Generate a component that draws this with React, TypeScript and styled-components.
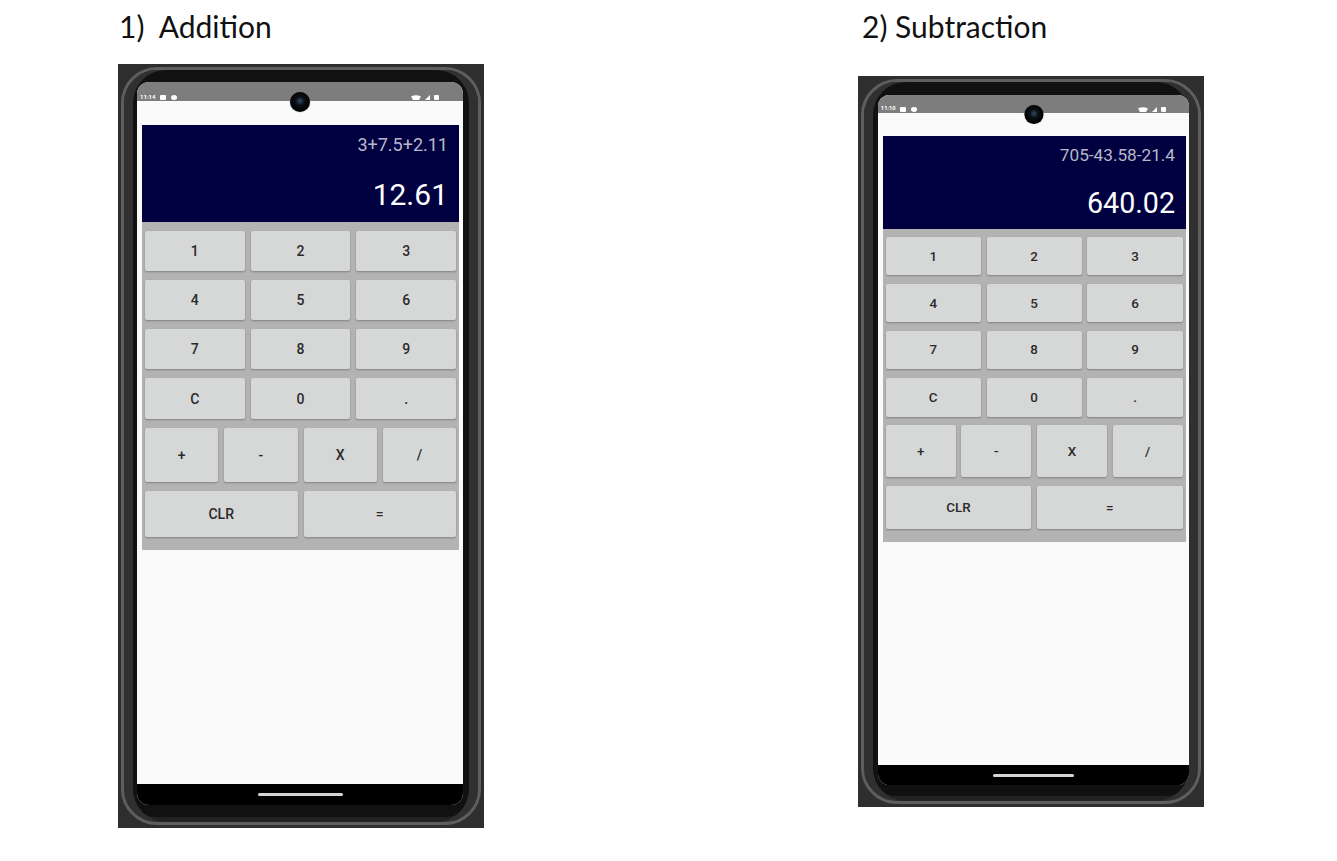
import React from 'react';
import styled, { createGlobalStyle } from 'styled-components';

// every size inside the phone screen is scaled by --k (second screenshot is a bit smaller)
const u = (n: number) => `calc(${n}px * var(--k))`;

const GlobalStyle = createGlobalStyle`
  body {
    margin: 0;
    background: #ffffff;
    font-family: Roboto, "Noto Sans", sans-serif;
  }
`;

const Page = styled.div`
  display: flex;
  align-items: flex-start;
  gap: 374px;
  width: 1337px;
  height: 861px;
  padding: 11px 0 0 118px;
  box-sizing: border-box;
`;

const Column = styled.section`
  display: flex;
  flex-direction: column;
`;

const Title = styled.h2<{ $indent: number }>`
  margin: 0;
  padding-left: ${p => p.$indent}px;
  font-family: Lato, "Open Sans", sans-serif;
  font-weight: 400;
  font-size: 30px;
  line-height: 30px;
  color: #111;
  white-space: pre;
`;

const Shell = styled.div<{ $top: number }>`
  margin-top: ${p => p.$top}px;
  padding: 3px;
  background: #2e2e2e;
`;

const Body = styled.div<{ $pad: string }>`
  padding: ${p => p.$pad};
  border: 3px solid #5e5e5e;
  border-radius: 36px;
  background: #111;
  box-shadow: inset 9px 0 0 #303030, inset -9px 0 0 #303030, inset 0 -5px 0 #222;
`;

const Screen = styled.div<{ $k: number }>`
  --k: ${p => p.$k};
  position: relative;
  display: flex;
  flex-direction: column;
  width: ${u(326)};
  height: ${u(723)};
  border-radius: ${u(12)};
  overflow: hidden;
  background: #fafafa;
`;

const StatusBar = styled.div`
  flex-shrink: 0;
  display: flex;
  justify-content: space-between;
  align-items: flex-end;
  height: ${u(19)};
  padding: 0 ${u(22)} ${u(1)} ${u(3)};
  box-sizing: border-box;
  background: #7d7d7d;
  color: #fff;
  font-family: Roboto, sans-serif;
  font-weight: 700;
  font-size: ${u(6)};
  line-height: 1;
`;

const StatusLeft = styled.div`
  display: flex;
  align-items: flex-end;
  gap: ${u(5)};
`;

const Dot = styled.span<{ $round?: boolean }>`
  width: ${u(6)};
  height: ${u(5)};
  background: #fff;
  border-radius: ${p => (p.$round ? '50%' : '1px')};
`;

const Camera = styled.div`
  position: absolute;
  top: ${u(10)};
  left: 50%;
  width: ${u(20)};
  height: ${u(20)};
  transform: translateX(-50%);
  border-radius: 50%;
  background: radial-gradient(circle at 50% 45%, #2d4c6a 0, #0b0f14 30%, #000 70%);
  box-shadow: 0 0 1px rgba(0, 0, 0, 0.6);
`;

const AppArea = styled.main`
  flex: 1;
  padding: ${u(24)} ${u(4)} 0 ${u(5)};
  background: #fafafa;
`;

const Display = styled.div`
  display: flex;
  flex-direction: column;
  align-items: flex-end;
  height: ${u(97)};
  padding: ${u(9)} ${u(11)};
  box-sizing: border-box;
  background: #000040;
`;

const Expression = styled.div`
  font-size: ${u(18)};
  line-height: ${u(22)};
  color: #b8b8c6;
`;

const Result = styled.div`
  margin-top: ${u(21)};
  font-size: ${u(30)};
  line-height: ${u(36)};
  color: #ffffff;
`;

const Keypad = styled.div`
  display: flex;
  flex-direction: column;
  gap: ${u(9)};
  padding: ${u(9)} ${u(3)} ${u(13)};
  background: #b3b3b3;
`;

const KeyRow = styled.div<{ $h: number }>`
  display: flex;
  gap: ${u(6)};
  height: calc(${p => p.$h}px * var(--k));
`;

const Key = styled.button`
  flex: 1;
  padding: 0;
  border: 0;
  border-radius: 2px;
  background: #d6d7d7;
  box-shadow: 0 1px 2px rgba(0, 0, 0, 0.28);
  font-family: Roboto, sans-serif;
  font-weight: 500;
  font-size: ${u(14)};
  color: #2a2a2a;
`;

const NavBar = styled.div`
  flex-shrink: 0;
  display: flex;
  align-items: center;
  justify-content: center;
  height: ${u(21)};
  background: #000;
`;

const HomeIndicator = styled.div`
  width: ${u(85)};
  height: ${u(3)};
  border-radius: 2px;
  background: #d4d4d4;
`;

const rows: { h: number; keys: string[] }[] = [
  { h: 40, keys: ['1', '2', '3'] },
  { h: 40, keys: ['4', '5', '6'] },
  { h: 40, keys: ['7', '8', '9'] },
  { h: 41, keys: ['C', '0', '.'] },
  { h: 54, keys: ['+', '-', 'X', '/'] },
  { h: 46, keys: ['CLR', '='] },
];

type PhoneProps = {
  k: number;
  top: number;
  pad: string;
  time: string;
  expression: string;
  result: string;
};

function StatusIcons() {
  return (
    <svg width="30" height="5" viewBox="0 0 30 5" fill="#fff">
      <path d="M0 1.5 Q5 -1 10 1.5 L8 5 L2 5 Z" />
      <path d="M14 5 L19 0 L19 5 Z" />
      <rect x="23" y="0" width="5" height="5" rx="1" />
    </svg>
  );
}

function Phone({ k, top, pad, time, expression, result }: PhoneProps) {
  return (
    <Shell $top={top}>
      <Body $pad={pad}>
        <Screen $k={k}>
          <StatusBar>
            <StatusLeft>
              <span>{time}</span>
              <Dot />
              <Dot $round />
            </StatusLeft>
            <StatusIcons />
          </StatusBar>
          <Camera />
          <AppArea>
            <Display>
              <Expression>{expression}</Expression>
              <Result>{result}</Result>
            </Display>
            <Keypad>
              {rows.map(row => (
                <KeyRow key={row.keys.join('')} $h={row.h}>
                  {row.keys.map(label => (
                    <Key key={label}>{label}</Key>
                  ))}
                </KeyRow>
              ))}
            </Keypad>
          </AppArea>
          <NavBar>
            <HomeIndicator />
          </NavBar>
        </Screen>
      </Body>
    </Shell>
  );
}

export default function App() {
  return (
    <>
      <GlobalStyle />
      <Page>
        <Column>
          <Title $indent={1}>{'1)  Addition'}</Title>
          <Phone
            k={1}
            top={23}
            pad="12px 15px 17px 13px"
            time="11:14"
            expression="3+7.5+2.11"
            result="12.61"
          />
        </Column>
        <Column>
          <Title $indent={4}>{'2) Subtraction'}</Title>
          <Phone
            k={0.955}
            top={35}
            pad="13px 9px 16px 14px"
            time="11:10"
            expression="705-43.58-21.4"
            result="640.02"
          />
        </Column>
      </Page>
    </>
  );
}
